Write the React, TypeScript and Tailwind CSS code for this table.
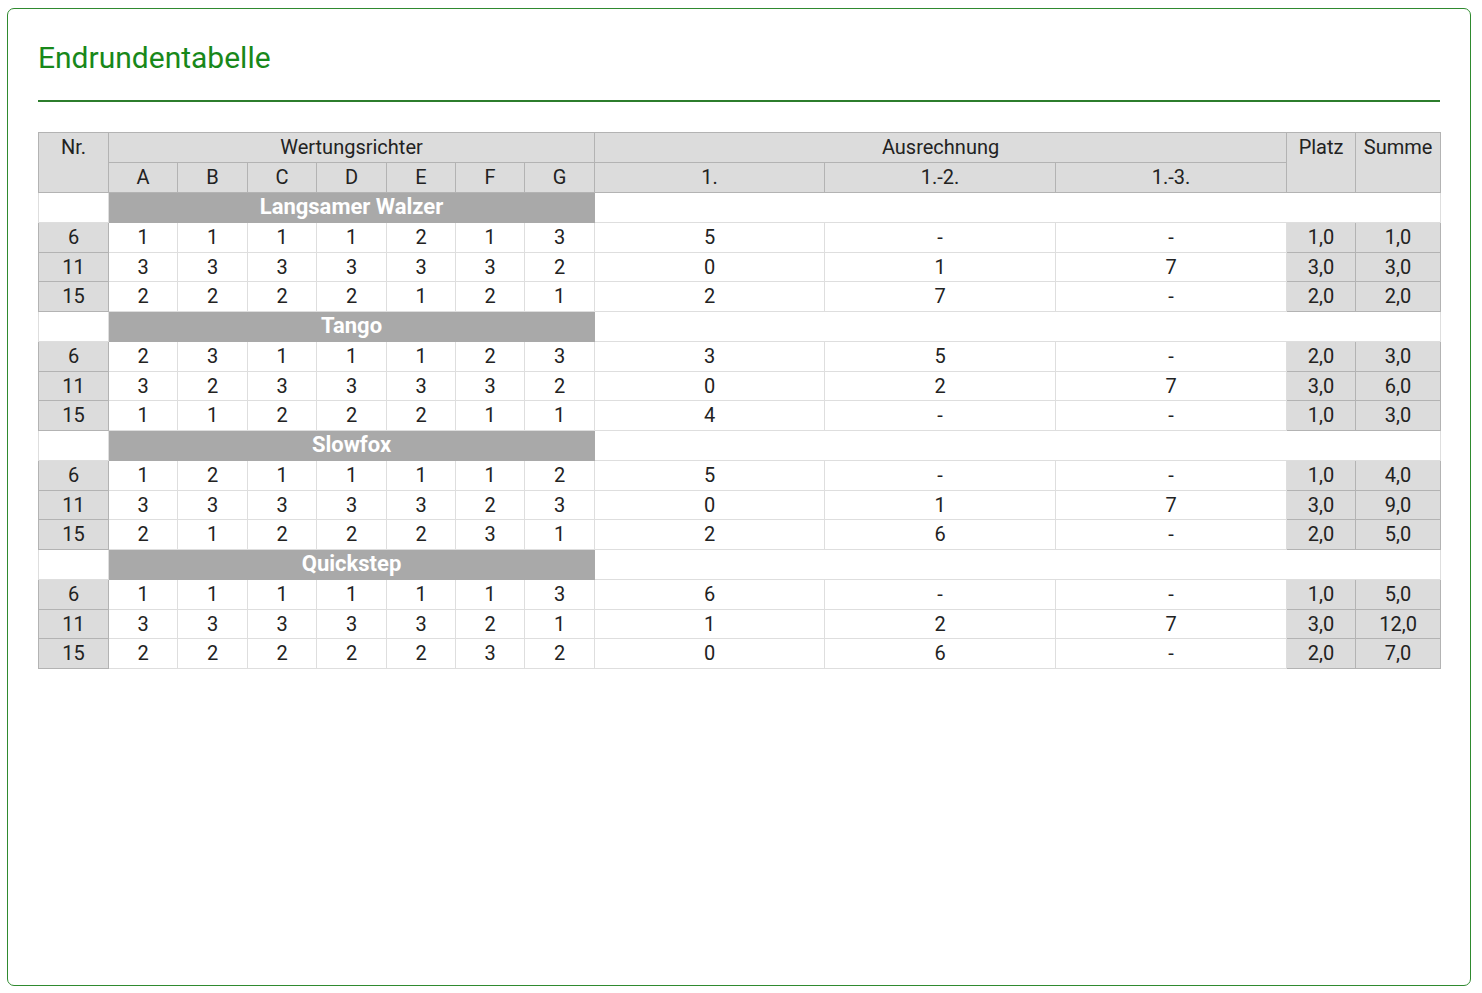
import React from "react";

type Row = { nr: string; j: string[]; a: string[]; platz: string; summe: string };
type Dance = { name: string; rows: Row[] };

const dances: Dance[] = [
  {
    name: "Langsamer Walzer",
    rows: [
      { nr: "6", j: ["1", "1", "1", "1", "2", "1", "3"], a: ["5", "-", "-"], platz: "1,0", summe: "1,0" },
      { nr: "11", j: ["3", "3", "3", "3", "3", "3", "2"], a: ["0", "1", "7"], platz: "3,0", summe: "3,0" },
      { nr: "15", j: ["2", "2", "2", "2", "1", "2", "1"], a: ["2", "7", "-"], platz: "2,0", summe: "2,0" },
    ],
  },
  {
    name: "Tango",
    rows: [
      { nr: "6", j: ["2", "3", "1", "1", "1", "2", "3"], a: ["3", "5", "-"], platz: "2,0", summe: "3,0" },
      { nr: "11", j: ["3", "2", "3", "3", "3", "3", "2"], a: ["0", "2", "7"], platz: "3,0", summe: "6,0" },
      { nr: "15", j: ["1", "1", "2", "2", "2", "1", "1"], a: ["4", "-", "-"], platz: "1,0", summe: "3,0" },
    ],
  },
  {
    name: "Slowfox",
    rows: [
      { nr: "6", j: ["1", "2", "1", "1", "1", "1", "2"], a: ["5", "-", "-"], platz: "1,0", summe: "4,0" },
      { nr: "11", j: ["3", "3", "3", "3", "3", "2", "3"], a: ["0", "1", "7"], platz: "3,0", summe: "9,0" },
      { nr: "15", j: ["2", "1", "2", "2", "2", "3", "1"], a: ["2", "6", "-"], platz: "2,0", summe: "5,0" },
    ],
  },
  {
    name: "Quickstep",
    rows: [
      { nr: "6", j: ["1", "1", "1", "1", "1", "1", "3"], a: ["6", "-", "-"], platz: "1,0", summe: "5,0" },
      { nr: "11", j: ["3", "3", "3", "3", "3", "2", "1"], a: ["1", "2", "7"], platz: "3,0", summe: "12,0" },
      { nr: "15", j: ["2", "2", "2", "2", "2", "3", "2"], a: ["0", "6", "-"], platz: "2,0", summe: "7,0" },
    ],
  },
];

const judges = ["A", "B", "C", "D", "E", "F", "G"];
const judgeW = [69, 70, 69, 70, 69, 69, 70];

const th = "bg-[#dcdcdc] border border-[#b3b3b3] font-normal text-center px-0 py-0 h-[30px] leading-[28px]";
const grayBase = "bg-[#dcdcdc] border border-[#b3b3b3] text-center leading-[28px] p-0";
const whiteBase = "bg-white border border-[#dedede] text-center leading-[28px] p-0";

export default function App() {
  return (
    <div className="pl-[7px] pt-[8px] pr-[11px] pb-[7px] bg-white" style={{ fontFamily: "Roboto, 'Liberation Sans', sans-serif" }}>
      <div className="h-[978px] w-[1464px] rounded-[7px] border border-[#2f8a2f] bg-white px-[30px] pt-[31px]">
        <h1 className="text-[30px] leading-[36px] text-[#18881a] font-normal">Endrundentabelle</h1>
        <div className="mt-[24px] h-[1.5px] bg-[#2c7d2c]" />
        <table className="mt-[30px] w-[1402px] border-collapse table-fixed text-[20px] text-[#222]">
          <colgroup>
            <col style={{ width: 70 }} />
            {judgeW.map((w, i) => (
              <col key={i} style={{ width: w }} />
            ))}
            <col style={{ width: 230 }} />
            <col style={{ width: 231 }} />
            <col style={{ width: 231 }} />
            <col style={{ width: 69 }} />
            <col style={{ width: 85 }} />
          </colgroup>
          <thead>
            <tr>
              <th rowSpan={2} className={th + " align-top"}>Nr.</th>
              <th colSpan={7} className={th}>Wertungsrichter</th>
              <th colSpan={3} className={th}>Ausrechnung</th>
              <th rowSpan={2} className={th + " align-top"}>Platz</th>
              <th rowSpan={2} className={th + " align-top"}>Summe</th>
            </tr>
            <tr>
              {judges.map((j) => (
                <th key={j} className={th}>{j}</th>
              ))}
              <th className={th}>1.</th>
              <th className={th}>1.-2.</th>
              <th className={th}>1.-3.</th>
            </tr>
          </thead>
          <tbody>
            {dances.map((d) => (
              <React.Fragment key={d.name}>
                <tr>
                  <td className={whiteBase + " h-[30px]"}></td>
                  <td colSpan={7} className="bg-[#a9a9a9] border border-[#a9a9a9] text-center text-white font-bold text-[22px] h-[30px] leading-[28px] p-0">
                    {d.name}
                  </td>
                  <td colSpan={5} className={whiteBase + " h-[30px]"}></td>
                </tr>
                {d.rows.map((r, i) => {
                  const h = i === 1 ? " h-[29px]" : " h-[30px]";
                  return (
                    <tr key={i}>
                      <td className={grayBase + h}>{r.nr}</td>
                      {r.j.map((v, k) => (
                        <td key={k} className={whiteBase + h}>{v}</td>
                      ))}
                      {r.a.map((v, k) => (
                        <td key={k} className={whiteBase + h}>{v}</td>
                      ))}
                      <td className={grayBase + h}>{r.platz}</td>
                      <td className={grayBase + h}>{r.summe}</td>
                    </tr>
                  );
                })}
              </React.Fragment>
            ))}
          </tbody>
        </table>
      </div>
    </div>
  );
}
